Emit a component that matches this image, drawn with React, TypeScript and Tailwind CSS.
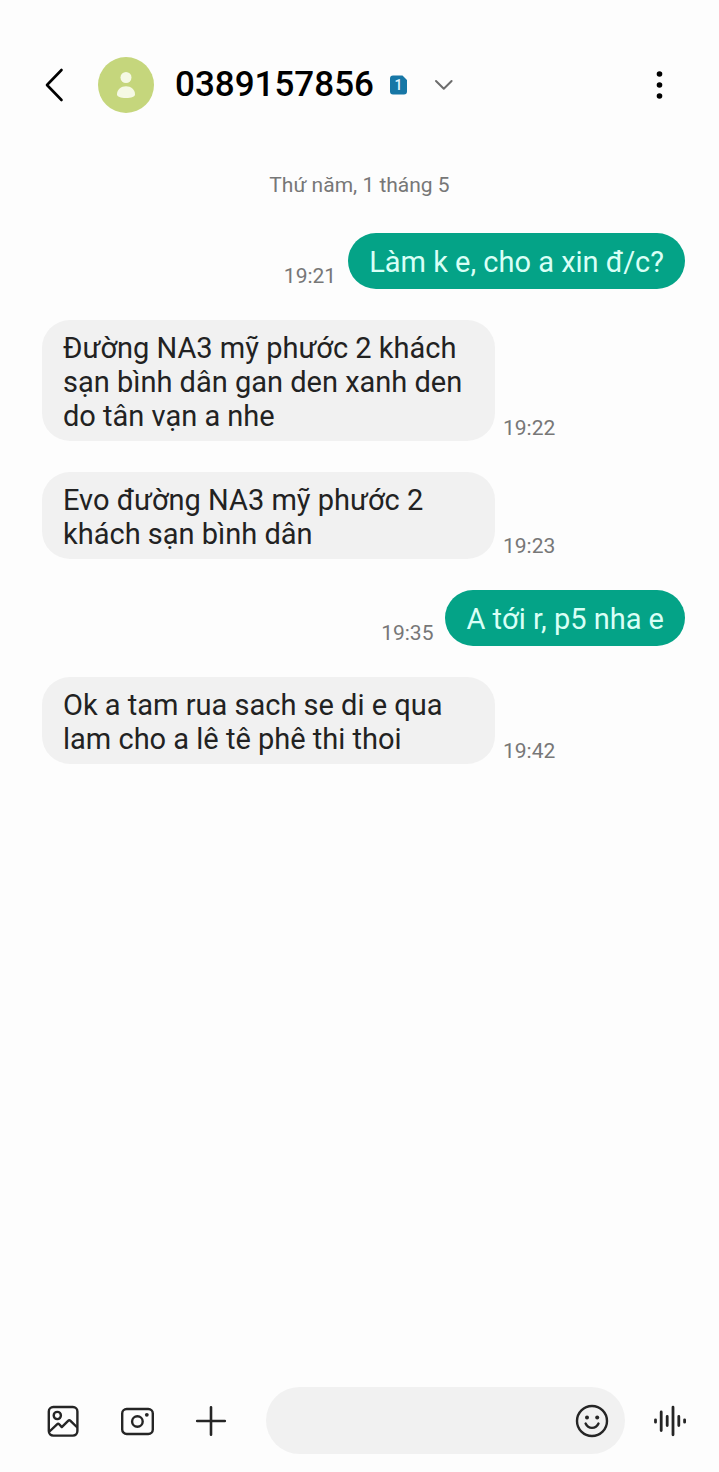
import React, { useState } from 'react';
import clsx from 'clsx';

interface Message {
  id: number;
  from: 'me' | 'them';
  text: string;
  time: string;
}

const MESSAGES: Message[] = [
  { id: 1, from: 'me', text: 'Làm k e, cho a xin đ/c?', time: '19:21' },
  { id: 2, from: 'them', text: 'Đường NA3 mỹ phước 2 khách sạn bình dân gan den xanh den do tân vạn a nhe', time: '19:22' },
  { id: 3, from: 'them', text: 'Evo đường NA3 mỹ phước 2 khách sạn bình dân', time: '19:23' },
  { id: 4, from: 'me', text: 'A tới r, p5 nha e', time: '19:35' },
  { id: 5, from: 'them', text: 'Ok a tam rua sach se di e qua lam cho a lê tê phê thi thoi', time: '19:42' },
];

const Header: React.FC = () => (
  <header className="flex items-center pt-[57px] pl-[42px] pr-[46px] text-black">
    <button aria-label="Quay lại" className="shrink-0">
      <svg width="24" height="36" viewBox="0 0 24 36" fill="none" stroke="currentColor" strokeWidth="2.6" strokeLinecap="round" strokeLinejoin="round">
        <path d="M19.5 3 5 18l14.500 15" />
      </svg>
    </button>
    <svg width="56" height="56" viewBox="0 0 56 56" className="ml-8 shrink-0" aria-hidden="true">
      <circle cx="28" cy="28" r="28" fill="#c5d67c" />
      <circle cx="28" cy="20.5" r="5.5" fill="#f5f9e4" />
      <path d="M19 37.2C19 32.5 23 29.2 28 29.2s9 3.3 9 8c0 2.6-3.5 3.8-9 3.8s-9-1.2-9-3.8z" fill="#f5f9e4" />
    </svg>
    <button className="ml-[21px] flex items-center">
      <h1 className="text-[35px] leading-[42px] font-medium">0389157856</h1>
      <svg width="18" height="20" viewBox="0 0 18 20" className="ml-4 shrink-0" role="img" aria-label="SIM 1">
        <path d="M3 .5h9.5L17 5v11.500a3 3 0 0 1-3 3H3a3 3 0 0 1-3-3v-13a3 3 0 0 1 3-3z" fill="#1777a6" />
        <text x="8.5" y="15" textAnchor="middle" fontSize="14" fontWeight="500" fill="#e2f6ff">1</text>
      </svg>
      <svg width="20" height="12" viewBox="0 0 20 12" className="ml-[26px] shrink-0" fill="none" stroke="#6d6d6d" strokeWidth="2" strokeLinecap="round" strokeLinejoin="round" aria-hidden="true">
        <path d="m2 2 7.800 7.800L17.600 2" />
      </svg>
    </button>
    <button aria-label="Tùy chọn khác" className="ml-auto shrink-0">
      <svg width="26" height="30" viewBox="0 0 26 30" fill="currentColor">
        <circle cx="12.5" cy="4" r="2.8" />
        <circle cx="12.5" cy="15" r="2.8" />
        <circle cx="12.5" cy="26" r="2.8" />
      </svg>
    </button>
  </header>
);

const MessageRow: React.FC<{ message: Message }> = ({ message }) => {
  const mine = message.from === 'me';

  return (
    <li className={clsx('flex items-end', mine ? 'flex-row-reverse gap-3' : 'gap-2')}>
      <p
        className={clsx(
          'rounded-[28px] px-[21px] text-[29px] leading-[34px]',
          mine
            ? 'bg-[#04a387] pt-3 pb-[10px] text-[#d9fff6]'
            : 'w-[63vw] bg-[#f1f1f1] pt-[11px] pb-2 text-[#222222]'
        )}
      >
        {message.text}
      </p>
      <time className="text-[21px] leading-[26px] text-[#777777]">{message.time}</time>
    </li>
  );
};

const Composer: React.FC = () => {
  const [draft, setDraft] = useState('');

  return (
    <footer className="mt-auto flex items-center pb-[18px] pl-[46px] pr-8 text-[#252525]">
      <button aria-label="Thư viện ảnh" className="shrink-0">
        <svg width="34" height="34" viewBox="0 0 34 34" fill="none" stroke="currentColor" strokeWidth="2.4" strokeLinejoin="round">
          <rect x="2.8" y="3" width="28.6" height="28.6" rx="4.5" />
          <circle cx="11.3" cy="11.5" r="3.6" />
          <path d="M3.5 27.5 11 20.3c.8-.7 1.500-.7 2.200 0l2.600 2.800 6.300-6.200c.8-.8 1.600-.8 2.400 0l6.800 6.600" />
        </svg>
      </button>
      <button aria-label="Máy ảnh" className="ml-10 shrink-0">
        <svg width="34" height="34" viewBox="0 0 34 34" fill="none" stroke="currentColor" strokeWidth="2.4">
          <rect x="2.2" y="5" width="30.6" height="25" rx="4.5" />
          <circle cx="17.4" cy="17.5" r="5.3" />
          <circle cx="26.8" cy="10.8" r="1.9" fill="currentColor" stroke="none" />
        </svg>
      </button>
      <button aria-label="Thêm" className="ml-10 shrink-0">
        <svg width="34" height="34" viewBox="0 0 34 34" fill="none" stroke="currentColor" strokeWidth="2.6" strokeLinecap="round">
          <path d="M17 3.2v27.6M3.2 17h27.6" />
        </svg>
      </button>
      <div className="ml-[38px] flex h-[67px] min-w-0 flex-1 items-center rounded-full bg-[#f1f1f1] pl-6 pr-4">
        <input
          type="text"
          aria-label="Tin nhắn"
          value={draft}
          onChange={(e) => setDraft(e.target.value)}
          className="min-w-0 flex-1 bg-transparent text-[29px] leading-[34px] outline-none"
        />
        <button aria-label="Biểu tượng cảm xúc" className="shrink-0">
          <svg width="34" height="34" viewBox="0 0 34 34" fill="none" stroke="currentColor" strokeWidth="2.4" strokeLinecap="round">
            <circle cx="17" cy="17" r="15" />
            <path d="M10.6 19.5c1.3 2.9 3.6 4.4 6.4 4.4s5.2-1.500 6.500-4.400" />
            <circle cx="12" cy="13.4" r="2" fill="currentColor" stroke="none" />
            <circle cx="22.2" cy="13.4" r="2" fill="currentColor" stroke="none" />
          </svg>
        </button>
      </div>
      <button aria-label="Tin nhắn thoại" className="ml-[27px] shrink-0">
        <svg width="35" height="34" viewBox="0 0 35 34" fill="none" stroke="currentColor" strokeWidth="2.8" strokeLinecap="round">
          <path d="M3.5 15.8v2.4M9.2 8v18.5M15.2 12.5v9M21 3.2v27.6M26.8 12.5v9M32.6 15.8v2.4" />
        </svg>
      </button>
    </footer>
  );
};

export default function App() {
  return (
    <div className="flex min-h-screen flex-col bg-[#fdfdfd] font-['Roboto','Noto_Sans',sans-serif]">
      <Header />
      <main className="pt-[59px] pb-8 pl-[42px] pr-[34px]">
        <p className="pr-2 text-center text-[21px] leading-[26px] text-[#777777]">Thứ năm, 1 tháng 5</p>
        <ul className="mt-[35px] flex flex-col gap-[31px]">
          {MESSAGES.map((message) => (
            <MessageRow key={message.id} message={message} />
          ))}
        </ul>
      </main>
      <Composer />
    </div>
  );
}
